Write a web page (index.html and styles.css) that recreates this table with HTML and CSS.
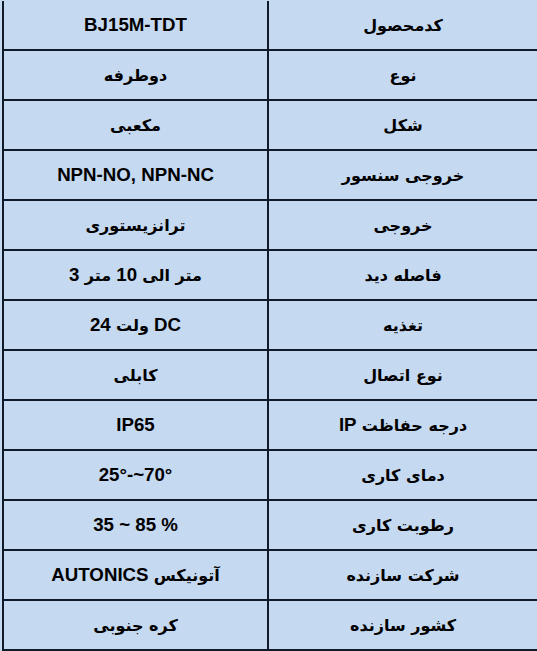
FILE: index.html
```html
<!DOCTYPE html>
<html lang="fa" dir="rtl">
<head>
<meta charset="utf-8">
<title>مشخصات BJ15M-TDT</title>
<link rel="stylesheet" href="styles.css">
</head>
<body>
<div class="spec">
  <div class="row"><div class="label"><span>کدمحصول</span></div><div class="value"><span class="latin" dir="ltr">BJ15M-TDT</span></div></div>
  <div class="row"><div class="label"><span>نوع</span></div><div class="value"><span>دوطرفه</span></div></div>
  <div class="row"><div class="label"><span>شکل</span></div><div class="value"><span>مکعبی</span></div></div>
  <div class="row"><div class="label"><span>خروجی سنسور</span></div><div class="value"><span class="latin" dir="ltr">NPN-NO, NPN-NC</span></div></div>
  <div class="row"><div class="label"><span>خروجی</span></div><div class="value"><span>ترانزیستوری</span></div></div>
  <div class="row"><div class="label"><span>فاصله دید</span></div><div class="value"><span class="latin"><span class="fa">متر الی</span> 10 <span class="fa">متر</span> 3</span></div></div>
  <div class="row"><div class="label"><span>تغذیه</span></div><div class="value"><span class="latin">DC <span class="fa">ولت</span> 24</span></div></div>
  <div class="row"><div class="label"><span>نوع اتصال</span></div><div class="value"><span>کابلی</span></div></div>
  <div class="row"><div class="label"><span class="latin"><span class="fa">درجه حفاظت</span> IP</span></div><div class="value"><span class="latin" dir="ltr">IP65</span></div></div>
  <div class="row"><div class="label"><span>دمای کاری</span></div><div class="value"><span class="latin" dir="ltr">25°-~70°</span></div></div>
  <div class="row"><div class="label"><span>رطوبت کاری</span></div><div class="value"><span class="latin" dir="ltr">35 ~ 85 %</span></div></div>
  <div class="row"><div class="label"><span>شرکت سازنده</span></div><div class="value"><span class="latin"><span class="fa">آتونیکس</span> AUTONICS</span></div></div>
  <div class="row"><div class="label"><span>کشور سازنده</span></div><div class="value"><span>کره جنوبی</span></div></div>
</div>
</body>
</html>
```
FILE: styles.css
```css
html, body {
  margin: 0;
  padding: 0;
  background: #c5d9f0;
}

body {
  font-family: "Liberation Sans", "DejaVu Sans", Arial, sans-serif;
  font-weight: bold;
  color: #000;
}

.spec {
  margin-left: 2px;
  margin-top: 1px;
  border-left: 2px solid #111a28;
  display: flex;
  flex-direction: column;
}

.row {
  display: grid;
  grid-template-columns: 268px 265px;
  height: 50px;
  box-sizing: border-box;
  border-bottom: 2px solid #111a28;
}

.label, .value {
  display: flex;
  align-items: center;
  justify-content: center;
  font-size: 16px;
  font-family: "DejaVu Sans", "Liberation Sans", sans-serif;
}

.value {
  border-right: 2px solid #111a28;
}

.latin {
  font-family: "Liberation Sans", Arial, sans-serif;
  font-size: 18.7px;
}

.fa {
  font-family: "DejaVu Sans", sans-serif;
  font-size: 16px;
}
```
